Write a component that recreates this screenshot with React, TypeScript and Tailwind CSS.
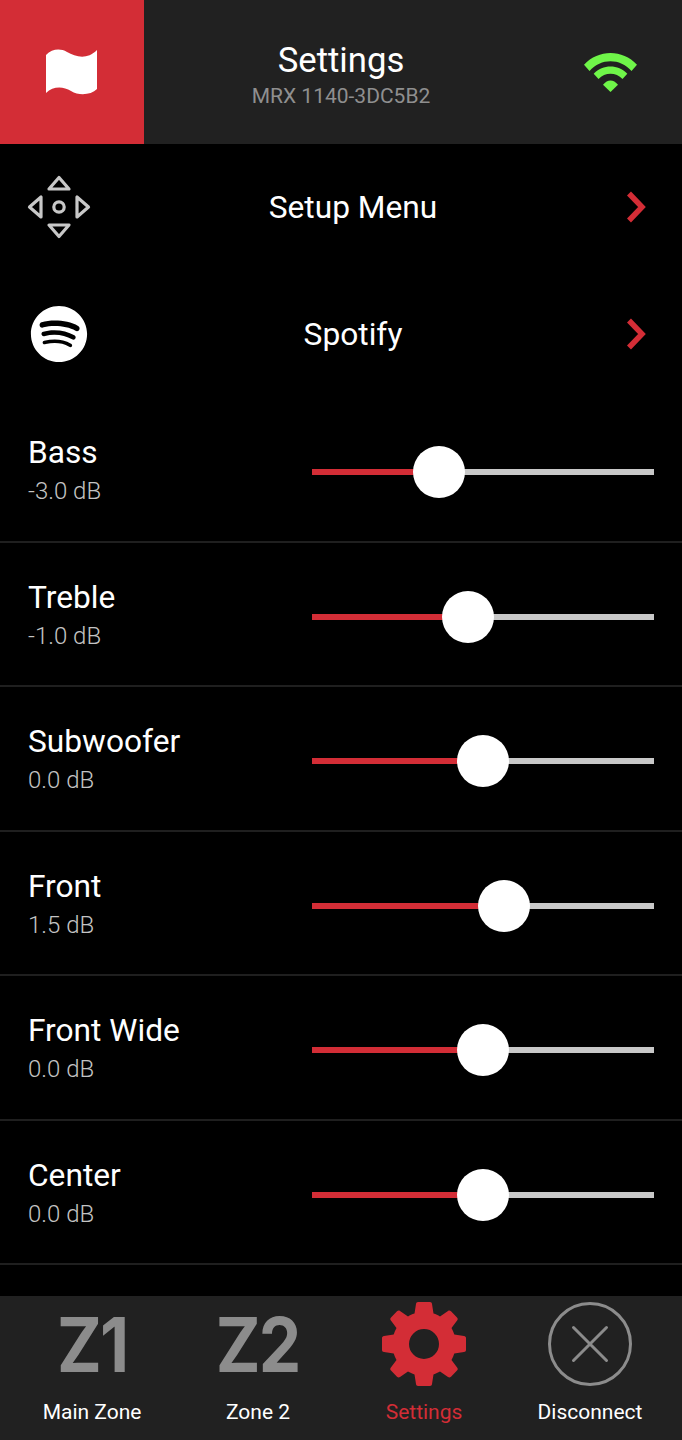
import { FaSpotify } from "react-icons/fa";

const sliders = [
  { name: "Bass", value: "-3.0 dB", pos: 127 },
  { name: "Treble", value: "-1.0 dB", pos: 156 },
  { name: "Subwoofer", value: "0.0 dB", pos: 171 },
  { name: "Front", value: "1.5 dB", pos: 192 },
  { name: "Front Wide", value: "0.0 dB", pos: 171 },
  { name: "Center", value: "0.0 dB", pos: 171 },
];

function FlagIcon() {
  return (
    <svg width="52" height="46" viewBox="0 0 52 46" fill="white">
      <path d="M0 6C6 0 14 -1 21 3C30 8 41 11 51 1V40C45 46 33 47 25 42C17 37 7 37 0 44Z" />
    </svg>
  );
}

function WifiIcon() {
  return (
    <svg width="53" height="39" viewBox="0 0 53 39" fill="#6ff549">
      <path d="M0 11.7C14.5 -3.9 38.5 -3.9 53 11.7L47.5 18C36 5 17 5 5.5 18Z" />
      <path d="M9.7 20.7C19 11 34 11 43.3 20.7L38.5 26C32 19 21 19 14.5 26Z" />
      <path d="M19 31.7C23.5 26 29.5 26 34 31.7L26.5 39Z" />
    </svg>
  );
}

function DpadIcon() {
  return (
    <svg width="64" height="64" viewBox="0 0 64 64" fill="none" stroke="#c8c8c8" strokeWidth="3.2" strokeLinejoin="round">
      <path d="M32 2.5L42 14H22Z" />
      <path d="M32 61.5L42 50H22Z" />
      <path d="M2.5 32L14 22V42Z" />
      <path d="M61.5 32L50 22V42Z" />
      <circle cx="32" cy="32" r="5.2" />
    </svg>
  );
}

function Chevron() {
  return (
    <svg width="22" height="32" viewBox="0 0 22 32" fill="none" stroke="#d32d36" strokeWidth="5.5">
      <path d="M4 2.5L17 16L4 29.5" />
    </svg>
  );
}

function GearIcon() {
  return (
    <svg width="84" height="84" viewBox="0 0 84 84" fill="#d32d36" fillRule="evenodd">
      <path d="M34 2C34 0.9 35 0 36 0H48C49 0 50 0.9 50 2L51.5 11.5C54 12.3 56 13.2 58 14.4L66 9C67 8.4 68 8.5 69 9.3L75 15.5C75.8 16.3 76 17.3 75.3 18.3L69.5 26C70.7 28 71.6 30.2 72.3 32.5L82 34C83.2 34.2 84 35 84 36V48C84 49 83.2 50 82 50L72.3 51.5C71.6 53.8 70.7 56 69.5 58L75.3 65.7C76 66.7 75.8 67.7 75 68.5L69 74.7C68 75.5 67 75.6 66 75L58 69.6C56 70.8 54 71.7 51.5 72.5L50 82C50 83.1 49 84 48 84H36C35 84 34 83.1 34 82L32.5 72.5C30 71.7 28 70.8 26 69.6L18 75C17 75.6 16 75.5 15 74.7L9 68.5C8.2 67.7 8 66.7 8.7 65.7L14.5 58C13.3 56 12.4 53.8 11.7 51.5L2 50C0.8 50 0 49 0 48V36C0 35 0.8 34.2 2 34L11.7 32.5C12.4 30.2 13.3 28 14.5 26L8.7 18.3C8 17.3 8.2 16.3 9 15.5L15 9.3C16 8.5 17 8.4 18 9L26 14.4C28 13.2 30 12.3 32.5 11.5ZM42 27A15 15 0 1 0 42 57A15 15 0 1 0 42 27Z" />
    </svg>
  );
}

function DisconnectIcon() {
  return (
    <svg width="84" height="84" viewBox="0 0 84 84" fill="none" stroke="#8c8c8c">
      <circle cx="42" cy="42" r="40.5" strokeWidth="3" />
      <path d="M25.5 25.5L58.5 58.5M58.5 25.5L25.5 58.5" strokeWidth="3" strokeLinecap="round" />
    </svg>
  );
}

function LinkRow({ icon, label }: { icon: React.ReactNode; label: string }) {
  return (
    <div className="flex h-[127px] items-center pb-[2px] pl-[27px] pr-[35px]">
      <div className="flex w-[64px] justify-center">{icon}</div>
      <div className="mt-[2px] flex-1 pr-[10px] text-center text-[31.7px] text-white">{label}</div>
      <Chevron />
    </div>
  );
}

function SliderRow({ name, value, pos }: { name: string; value: string; pos: number }) {
  return (
    <div className="flex h-[144.5px] items-center border-b-2 border-[#1f1f1f] pl-[28px] pr-[28px] pt-[6px]">
      <div className="w-[284px]">
        <div className="text-[31.7px] leading-[38px] text-white">{name}</div>
        <div className="text-[24px] font-light leading-[38px] text-[#c4c4c4]">{value}</div>
      </div>
      <div className="flex flex-1 items-center">
        <div className="h-[6px] bg-[#d32d36]" style={{ width: pos }} />
        <div className="z-10 -mx-[26px] h-[52px] w-[52px] shrink-0 rounded-full bg-white" />
        <div className="h-[6px] flex-1 bg-[#c8c8c8]" />
      </div>
    </div>
  );
}

function NavItem({ icon, label, active }: { icon: React.ReactNode; label: string; active?: boolean }) {
  return (
    <div className="flex flex-col items-center">
      <div className="flex h-[84px] items-center justify-center">{icon}</div>
      <div className={"mt-[13px] text-[21px] leading-[26px] " + (active ? "text-[#d32d36]" : "text-white")}>{label}</div>
    </div>
  );
}

function ZoneMark({ text }: { text: string }) {
  return (
    <span className="scale-x-90 font-['Inter',sans-serif] text-[75px] font-bold leading-none tracking-[-2px] text-[#8c8c8c]">
      {text}
    </span>
  );
}

export default function App() {
  return (
    <div className="flex h-[1440px] w-[682px] flex-col overflow-hidden bg-black font-['Roboto',sans-serif]">
      <header className="flex h-[144px] shrink-0 bg-[#212121]">
        <div className="flex w-[144px] items-center justify-center bg-[#d32d36]">
          <FlagIcon />
        </div>
        <div className="flex flex-1 flex-col items-center justify-center pt-[12px]">
          <div className="text-[34.7px] leading-[36px] text-white">Settings</div>
          <div className="text-[21px] leading-[36px] text-[#8f8f8f]">MRX 1140-3DC5B2</div>
        </div>
        <div className="flex w-[144px] items-center justify-center">
          <WifiIcon />
        </div>
      </header>

      <main className="min-h-0 flex-1 overflow-hidden">
        <LinkRow icon={<DpadIcon />} label="Setup Menu" />
        <LinkRow icon={<FaSpotify size={58} color="white" />} label="Spotify" />
        {sliders.map((s) => (
          <SliderRow key={s.name} {...s} />
        ))}
      </main>

      <nav className="grid h-[144px] shrink-0 grid-cols-4 bg-[#212121] px-[9px] pt-[6px]">
        <NavItem icon={<ZoneMark text="Z1" />} label="Main Zone" />
        <NavItem icon={<ZoneMark text="Z2" />} label="Zone 2" />
        <NavItem icon={<GearIcon />} label="Settings" active />
        <NavItem icon={<DisconnectIcon />} label="Disconnect" />
      </nav>
    </div>
  );
}
